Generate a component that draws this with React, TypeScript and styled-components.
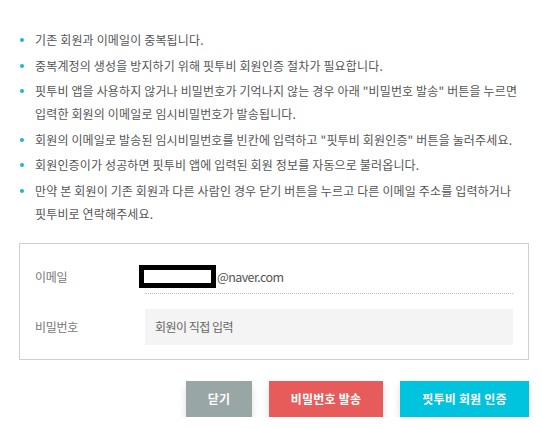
import React from "react";
import styled, { createGlobalStyle } from "styled-components";

const Global = createGlobalStyle`
  html, body { margin: 0; padding: 0; background: #fff; }
  body {
    font-family: "Noto Sans CJK KR", "Noto Sans", sans-serif;
    -webkit-font-smoothing: antialiased;
  }
  * { box-sizing: border-box; }
`;

const Page = styled.div`
  width: 542px;
  padding: 28px 13px 0 19px;
`;

const Notes = styled.ul`
  list-style: none;
  margin: 0;
  padding: 0;
  display: flex;
  flex-direction: column;
  gap: 2.5px;
`;

const Note = styled.li`
  display: flex;
  align-items: flex-start;
  font-size: 12px;
  line-height: 23px;
  letter-spacing: 0.15px;
  color: #555;
`;

const Dot = styled.span`
  flex: none;
  width: 4px;
  height: 4px;
  border-radius: 50%;
  background: #1fb6d2;
  margin: 10px 11px 0 1px;
`;

const Box = styled.div`
  margin-top: 18px;
  width: 510px;
  border: 1px solid #cfcfcf;
  padding: 16px 15px 14px 15px;
  display: flex;
  flex-direction: column;
  gap: 15px;
`;

const Row = styled.div`
  display: grid;
  grid-template-columns: 110px 1fr;
  align-items: center;
  font-size: 12px;
  letter-spacing: -0.3px;
`;

const Label = styled.div`
  color: #777;
`;

const EmailValue = styled.div`
  height: 34px;
  display: flex;
  align-items: center;
  border-bottom: 1px dotted #bdbdbd;
  color: #555;
  font-size: 12.5px;
  letter-spacing: -0.6px;
`;

const Redact = styled.span`
  display: inline-block;
  width: 77px;
  height: 23px;
  border: 5px solid #000;
  background: #fff;
  margin-left: -6px;
  margin-right: 1px;
`;

const InputBox = styled.div`
  height: 36px;
  background: #f4f4f4;
  display: flex;
  align-items: center;
  padding-left: 10px;
  color: #666;
  letter-spacing: -0.5px;
`;

const Actions = styled.div`
  margin-top: 21px;
  width: 510px;
  display: flex;
  justify-content: flex-end;
  gap: 17px;
`;

const Button = styled.button<{ $bg: string; $w: number }>`
  width: ${(p) => p.$w}px;
  height: 36px;
  border: none;
  background: ${(p) => p.$bg};
  color: #fff;
  font-family: "Noto Sans CJK KR", "Noto Sans", sans-serif;
  font-size: 12px;
  font-weight: 700;
  letter-spacing: 0.2px;
  box-shadow: 0 5px 8px rgba(0, 0, 0, 0.13);
  cursor: pointer;
  padding: 0;
`;

const notes: string[][] = [
  ["기존 회원과 이메일이 중복됩니다."],
  ["중복계정의 생성을 방지하기 위해 핏투비 회원인증 절차가 필요합니다."],
  [
    "핏투비 앱을 사용하지 않거나 비밀번호가 기억나지 않는 경우 아래 \"비밀번호 발송\" 버튼을 누르면",
    "입력한 회원의 이메일로 임시비밀번호가 발송됩니다.",
  ],
  ["회원의 이메일로 발송된 임시비밀번호를 빈칸에 입력하고 \"핏투비 회원인증\" 버튼을 눌러주세요."],
  ["회원인증이가 성공하면 핏투비 앱에 입력된 회원 정보를 자동으로 불러옵니다."],
  [
    "만약 본 회원이 기존 회원과 다른 사람인 경우 닫기 버튼을 누르고 다른 이메일 주소를 입력하거나",
    "핏투비로 연락해주세요.",
  ],
];

export default function App() {
  return (
    <>
      <Global />
      <Page>
        <Notes>
          {notes.map((lines, i) => (
            <Note key={i}>
              <Dot />
              <div>
                {lines.map((l, j) => (
                  <div key={j}>{l}</div>
                ))}
              </div>
            </Note>
          ))}
        </Notes>
        <Box>
          <Row>
            <Label>이메일</Label>
            <EmailValue>
              <Redact />
              @naver.com
            </EmailValue>
          </Row>
          <Row>
            <Label>비밀번호</Label>
            <InputBox>회원이 직접 입력</InputBox>
          </Row>
        </Box>
        <Actions>
          <Button $bg="#99a6a6" $w={66}>닫기</Button>
          <Button $bg="#e85b5b" $w={114}>비밀번호 발송</Button>
          <Button $bg="#00c3de" $w={129}>핏투비 회원 인증</Button>
        </Actions>
      </Page>
    </>
  );
}
